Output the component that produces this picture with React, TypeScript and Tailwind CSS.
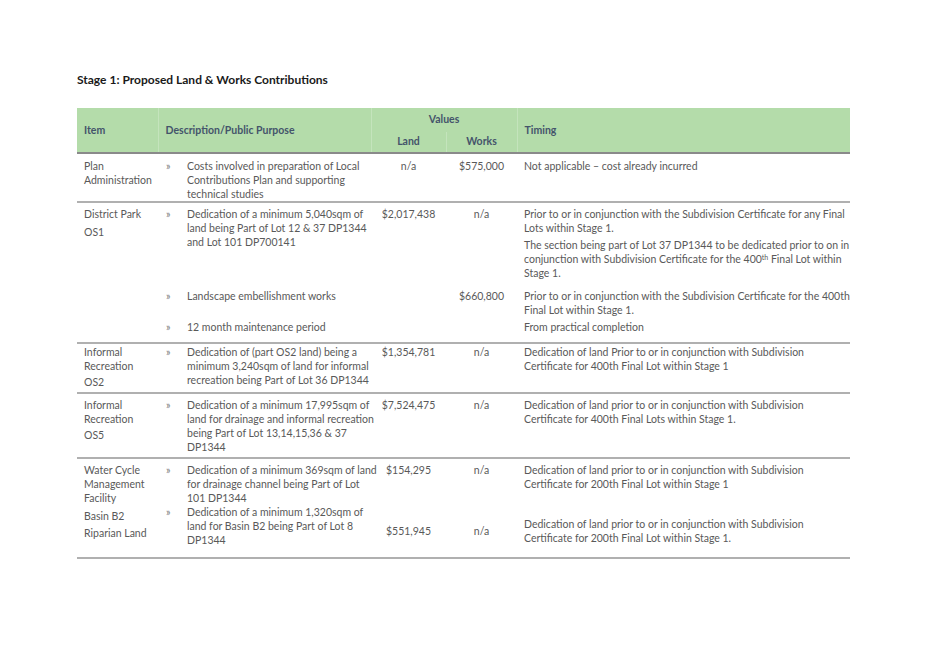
const Bullet = () => <span className="w-[22px] shrink-0 pl-[1px] text-[#7a7a7a]">»</span>;

const Desc = ({ lines }: { lines: string[] }) => (
  <div className="flex">
    <Bullet />
    <div className="whitespace-nowrap">
      {lines.map((l, i) => (
        <div key={i}>{l}</div>
      ))}
    </div>
  </div>
);

const Lines = ({ lines, className = "" }: { lines: string[]; className?: string }) => (
  <div className={"whitespace-nowrap " + className}>
    {lines.map((l, i) => (
      <div key={i}>{l}</div>
    ))}
  </div>
);

const td = "align-top px-[7px]";
const hb = "border-b-2 border-b-[#8a8a8a]";

export default function App() {
  return (
    <div className="w-[928px] h-[657px] bg-white font-['Lato',sans-serif] text-[10.5px] leading-[14px] text-[#595959]">
      <div className="pt-[72px] pl-[77px]">
        <h1 className="text-[12px] leading-[15px] font-bold text-[#1a1a1a]">
          Stage 1: Proposed Land &amp; Works Contributions
        </h1>
        <table className="mt-[21px] table-fixed border-collapse w-[773px]">
          <colgroup>
            <col className="w-[81px]" />
            <col className="w-[213px]" />
            <col className="w-[75px]" />
            <col className="w-[71px]" />
            <col className="w-[333px]" />
          </colgroup>
          <thead className="bg-[#b4dcaa] text-[#44546a] font-bold">
            <tr>
              <th rowSpan={2} className={"text-left px-[7px] align-middle border-r border-[#c4e4bc] " + hb}>Item</th>
              <th rowSpan={2} className={"text-left px-[7px] align-middle border-r border-[#c4e4bc] " + hb}>Description/Public Purpose</th>
              <th colSpan={2} className="text-center align-top h-[24px] pt-[4px] border-r border-[#c4e4bc]">Values</th>
              <th rowSpan={2} className={"text-left px-[7px] align-middle " + hb}>Timing</th>
            </tr>
            <tr>
              <th className={"text-center align-top h-[21px] pt-[2px] border-r border-[#c4e4bc] " + hb}>Land</th>
              <th className={"text-center align-top pt-[2px] border-r border-[#c4e4bc] " + hb}>Works</th>
            </tr>
          </thead>
          <tbody>
            <tr className="border-b-2 border-[#b0b0b0]">
              <td className={td + " pt-[5px] pb-0"}>
                <Lines lines={["Plan", "Administration"]} />
              </td>
              <td className={td + " pt-[5px] pb-0"}>
                <Desc lines={["Costs involved in preparation of Local", "Contributions Plan and supporting", "technical studies"]} />
              </td>
              <td className={td + " pt-[5px] text-center"}>n/a</td>
              <td className={td + " pt-[5px] text-center"}>$575,000</td>
              <td className={td + " pt-[5px]"}>Not applicable – cost already incurred</td>
            </tr>

            <tr>
              <td rowSpan={3} className={td + " pt-[4px]"}>
                <div>District Park</div>
                <div className="mt-[4px]">OS1</div>
              </td>
              <td className={td + " pt-[4px]"}>
                <Desc lines={["Dedication of a minimum 5,040sqm of", "land being Part of Lot 12 & 37 DP1344", "and Lot 101 DP700141"]} />
              </td>
              <td className={td + " pt-[4px] text-center"}>$2,017,438</td>
              <td className={td + " pt-[4px] text-center"}>n/a</td>
              <td className={td + " pt-[4px] pb-[9px]"}>
                <Lines lines={["Prior to or in conjunction with the Subdivision Certificate for any Final", "Lots within Stage 1."]} />
                <div className="mt-[3px] whitespace-nowrap">
                  <div>The section being part of Lot 37 DP1344 to be dedicated prior to on in</div>
                  <div>
                    conjunction with Subdivision Certificate for the 400<sup className="text-[7px]">th</sup> Final Lot within
                  </div>
                  <div>Stage 1.</div>
                </div>
              </td>
            </tr>
            <tr>
              <td className={td}>
                <Desc lines={["Landscape embellishment works"]} />
              </td>
              <td className={td}></td>
              <td className={td + " text-center"}>$660,800</td>
              <td className={td + " pb-[3px]"}>
                <Lines lines={["Prior to or in conjunction with the Subdivision Certificate for the 400th", "Final Lot within Stage 1."]} />
              </td>
            </tr>
            <tr className="border-b-2 border-[#b0b0b0]">
              <td className={td + " pb-[8px]"}>
                <Desc lines={["12 month maintenance period"]} />
              </td>
              <td className={td}></td>
              <td className={td}></td>
              <td className={td}>From practical completion</td>
            </tr>

            <tr className="border-b-2 border-[#b0b0b0]">
              <td className={td + " pt-[1px] pb-[3px]"}>
                <Lines lines={["Informal", "Recreation"]} />
                <div className="mt-[2px]">OS2</div>
              </td>
              <td className={td + " pt-[1px]"}>
                <Desc lines={["Dedication of (part OS2 land) being a", "minimum 3,240sqm of land for informal", "recreation being Part of Lot 36 DP1344"]} />
              </td>
              <td className={td + " pt-[1px] text-center"}>$1,354,781</td>
              <td className={td + " pt-[1px] text-center"}>n/a</td>
              <td className={td + " pt-[1px]"}>
                <Lines lines={["Dedication of land Prior to or in conjunction with Subdivision", "Certificate for 400th Final Lot within Stage 1"]} />
              </td>
            </tr>

            <tr className="border-b-2 border-[#b0b0b0]">
              <td className={td + " pt-[4px]"}>
                <Lines lines={["Informal", "Recreation"]} />
                <div className="mt-[2px]">OS5</div>
              </td>
              <td className={td + " pt-[4px] pb-[3px]"}>
                <Desc lines={["Dedication of a minimum 17,995sqm of", "land for drainage and informal recreation", "being Part of Lot 13,14,15,36 & 37", "DP1344"]} />
              </td>
              <td className={td + " pt-[4px] text-center"}>$7,524,475</td>
              <td className={td + " pt-[4px] text-center"}>n/a</td>
              <td className={td + " pt-[4px]"}>
                <Lines lines={["Dedication of land prior to or in conjunction with Subdivision", "Certificate for 400th Final Lots within Stage 1."]} />
              </td>
            </tr>

            <tr>
              <td className={td + " pt-[4px]"}>
                <Lines lines={["Water Cycle", "Management", "Facility"]} />
              </td>
              <td className={td + " pt-[4px]"}>
                <Desc lines={["Dedication of a minimum 369sqm of land", "for drainage channel being Part of Lot", "101 DP1344"]} />
              </td>
              <td className={td + " pt-[4px] text-center"}>$154,295</td>
              <td className={td + " pt-[4px] text-center"}>n/a</td>
              <td className={td + " pt-[4px]"}>
                <Lines lines={["Dedication of land prior to or in conjunction with Subdivision", "Certificate for 200th Final Lot within Stage 1"]} />
              </td>
            </tr>
            <tr className="border-b-2 border-[#b0b0b0]">
              <td className={td + " pt-[4px]"}>
                <div>Basin B2</div>
                <div className="mt-[3px]">Riparian Land</div>
              </td>
              <td className={td + " pt-0 pb-[10px]"}>
                <Desc lines={["Dedication of a minimum 1,320sqm of", "land for Basin B2 being Part of Lot 8", "DP1344"]} />
              </td>
              <td className="align-middle px-[7px] text-center">$551,945</td>
              <td className="align-middle px-[7px] text-center">n/a</td>
              <td className="align-middle px-[7px]">
                <Lines lines={["Dedication of land prior to or in conjunction with Subdivision", "Certificate for 200th Final Lot within Stage 1."]} />
              </td>
            </tr>
          </tbody>
        </table>
      </div>
    </div>
  );
}
